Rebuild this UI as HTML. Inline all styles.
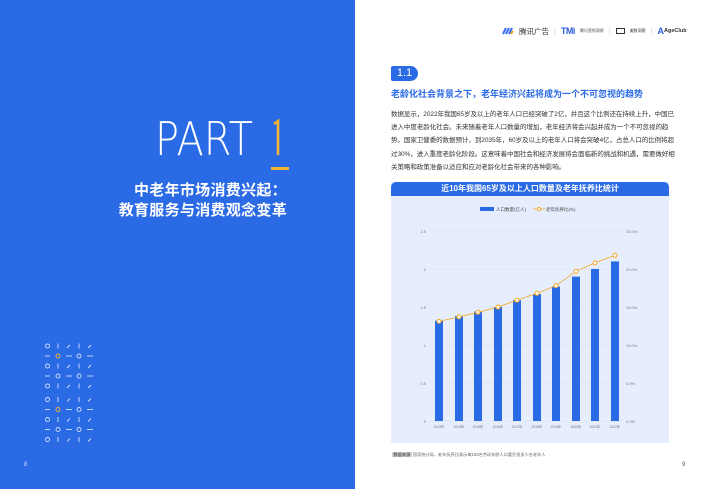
<!DOCTYPE html>
<html><head><meta charset="utf-8"><style>
*{margin:0;padding:0;box-sizing:border-box}
body{width:710px;height:489px;overflow:hidden;background:#fff;position:relative;font-family:"Liberation Sans","Noto Sans CJK SC",sans-serif}
.left{position:absolute;left:0;top:0;width:355px;height:489px;background:#2a6ae4}
.abs{position:absolute}
.cjk{font-family:"Liberation Sans","Noto Sans CJK SC",sans-serif}
p.t{font-size:6.5px;color:#333;line-height:13.2px;letter-spacing:-0.05px}
</style></head><body>
<div class="left">
  <svg class="abs" style="left:150px;top:110px" width="150" height="60" font-family="DejaVu Sans,sans-serif">
    <text x="5" y="45" font-size="46" fill="#fff" font-weight="200" textLength="98" lengthAdjust="spacingAndGlyphs">PART</text>
    <path d="M124 14 L128 11 L128 45" stroke="#f5b335" stroke-width="2.6" fill="none"/>
  </svg>
  <div class="abs" style="left:271px;top:167px;width:18px;height:3px;background:#f5b335"></div>
  <div class="abs cjk" style="right:68px;top:181px;text-align:right;color:#fff;font-weight:bold;font-size:15px;line-height:20px;letter-spacing:0.3px">中老年市场消费兴起：<br>教育服务与消费观念变革</div>
  <svg class="abs" style="left:42px;top:342px" width="55" height="105" viewBox="0 0 55 105" fill="none" stroke-width="0.9">
    <g stroke="#cfe0ff">
      <g id="blk">
        <circle cx="5.5" cy="4" r="2"/><line x1="16" y1="1.5" x2="16" y2="6.5"/><line x1="25" y1="6" x2="28" y2="3"/><line x1="37" y1="1.5" x2="37" y2="6.5"/><line x1="46" y1="6" x2="49" y2="3"/>
        <line x1="3" y1="14" x2="8" y2="14"/><circle cx="16" cy="14" r="2" stroke="#f5b335"/><line x1="24" y1="14" x2="30" y2="14"/><circle cx="37" cy="14" r="2"/><line x1="45" y1="14" x2="51" y2="14"/>
        <circle cx="5.5" cy="24" r="2"/><line x1="16" y1="21.5" x2="16" y2="26.5"/><line x1="25" y1="26" x2="28" y2="23"/><line x1="37" y1="21.5" x2="37" y2="26.5"/><line x1="46" y1="26" x2="49" y2="23"/>
        <line x1="3" y1="34" x2="8" y2="34"/><circle cx="16" cy="34" r="2"/><line x1="24" y1="34" x2="30" y2="34"/><circle cx="37" cy="34" r="2"/><line x1="45" y1="34" x2="51" y2="34"/>
        <circle cx="5.5" cy="44" r="2"/><line x1="16" y1="41.5" x2="16" y2="46.5"/><line x1="25" y1="46" x2="28" y2="43"/><line x1="37" y1="41.5" x2="37" y2="46.5"/><line x1="46" y1="46" x2="49" y2="43"/>
      </g>
      <use href="#blk" y="53.5"/>
    </g>
  </svg>
  <div class="abs" style="left:24px;top:462px;font-size:6px;color:#cfe0ff">8</div>
</div>

<div class="abs" style="left:502px;top:25px;height:12px;display:flex;align-items:center;font-size:7px;color:#333;gap:5px">
  <svg width="12" height="8" viewBox="0 0 12 8"><path d="M1 7L4 1M4 7L7 1M7 7L10 1" stroke="#3a6ef0" stroke-width="2"/><path d="M9 7L11 4" stroke="#f5a623" stroke-width="2"/></svg>
  <span style="font-size:7.5px">腾讯广告</span><span style="color:#ccc">|</span>
  <span style="font-weight:bold;color:#2a5ce0;font-size:9px;letter-spacing:-0.5px">TMi</span><span style="font-size:4px;color:#555">腾讯营销洞察</span><span style="color:#ccc">|</span>
  <span style="border:1px solid #333;width:9px;height:6px;display:inline-block"></span><span style="font-size:4px;color:#333">美数洞察</span><span style="color:#ccc">|</span>
  <span style="font-weight:bold;color:#2a5ce0;font-size:9px">A</span><span style="font-size:5.5px;font-weight:bold;margin-left:-5px">AgeClub</span>
</div>

<div class="abs" style="left:391px;top:66px;width:27px;height:15px;background:#2a6ae4;border-radius:2px 8px 8px 2px;color:#fff;font-size:11px;line-height:15px;text-align:center">1.1</div>
<div class="abs cjk" style="left:391px;top:87px;font-size:9px;font-weight:bold;color:#2a6ae4;white-space:nowrap">老龄化社会背景之下，老年经济兴起将成为一个不可忽视的趋势</div>
<p class="abs t cjk" style="left:391px;top:108px;width:285px">数据显示，2022年我国65岁及以上的老年人口已经突破了2亿，并且这个比例还在持续上升，中国已进入中度老龄化社会。未来随着老年人口数量的增加，老年经济将会兴起并成为一个不可忽视的趋势。国家卫健委的数据预计，到2035年，60岁及以上的老年人口将会突破4亿，占总人口的比例将超过30%，进入重度老龄化阶段。这意味着中国社会和经济发展将会面临新的挑战和机遇，需要做好相关策略和政策准备以适应和应对老龄化社会带来的各种影响。</p>

<div class="abs" style="left:391px;top:182px;width:278px;height:261px;background:#e6eefd"></div>
<div class="abs cjk" style="left:391px;top:182px;width:278px;height:14px;background:#2a6ae4;border-radius:5px 5px 0 0;color:#fff;font-size:8px;font-weight:bold;text-align:center;line-height:14px">近10年我国65岁及以上人口数量及老年抚养比统计</div>
<svg class="abs" style="left:380px;top:180px" width="300" height="270" viewBox="380 180 300 270" font-family="Liberation Sans,Noto Sans CJK SC,sans-serif">
  <rect x="480" y="207" width="14" height="4" fill="#2a6ae4"/>
  <text x="496" y="211" font-size="4.5" fill="#444">人口数量(亿人)</text>
  <line x1="533" y1="209" x2="545" y2="209" stroke="#f5a623" stroke-width="0.8"/><circle cx="539" cy="209" r="1.6" fill="#fff" stroke="#f5a623" stroke-width="0.9"/>
  <text x="546" y="211" font-size="4.5" fill="#444">老年抚养比(%)</text>
  <g stroke="#d5ddec" stroke-width="0.4">
    <line x1="430" y1="231" x2="622" y2="231"/><line x1="430" y1="269" x2="622" y2="269"/><line x1="430" y1="307" x2="622" y2="307"/><line x1="430" y1="345" x2="622" y2="345"/><line x1="430" y1="383" x2="622" y2="383"/><line x1="430" y1="421" x2="622" y2="421"/>
  </g>
  <g font-size="4" fill="#777" text-anchor="end">
    <text x="426" y="233">2.5</text><text x="426" y="271">2</text><text x="426" y="309">1.5</text><text x="426" y="347">1</text><text x="426" y="385">0.5</text><text x="426" y="423">0</text>
  </g>
  <g font-size="4" fill="#777">
    <text x="626" y="233">25.0%</text><text x="626" y="271">20.0%</text><text x="626" y="309">15.0%</text><text x="626" y="347">10.0%</text><text x="626" y="385">5.0%</text><text x="626" y="423">0.0%</text>
  </g>
  <g fill="#2a6ae4">
    <rect x="435" y="320.7" width="8" height="100.3"/><rect x="455" y="316.1" width="8" height="104.9"/><rect x="474" y="311.6" width="8" height="109.4"/><rect x="494" y="307" width="8" height="114"/><rect x="513" y="300.2" width="8" height="120.8"/><rect x="533" y="294.1" width="8" height="126.9"/><rect x="552" y="286.5" width="8" height="134.5"/><rect x="572" y="276.6" width="8" height="144.4"/><rect x="591" y="269" width="8" height="152"/><rect x="611" y="261.4" width="8" height="159.6"/>
  </g>
  <polyline fill="none" stroke="#f5a623" stroke-width="0.8" points="439,321.4 459,316.9 478,312.3 498,307 517,300.2 537,293.3 556,285.7 576,271.3 595,262.9 615,255.3"/>
  <g fill="#fff" stroke="#f5a623" stroke-width="1">
    <circle cx="439" cy="321.4" r="2"/><circle cx="459" cy="316.9" r="2"/><circle cx="478" cy="312.3" r="2"/><circle cx="498" cy="307" r="2"/><circle cx="517" cy="300.2" r="2"/><circle cx="537" cy="293.3" r="2"/><circle cx="556" cy="285.7" r="2"/><circle cx="576" cy="271.3" r="2"/><circle cx="595" cy="262.9" r="2"/><circle cx="615" cy="255.3" r="2"/>
  </g>
  <g font-size="3.3" fill="#777" text-anchor="middle">
    <text x="439" y="428">2013年</text><text x="459" y="428">2014年</text><text x="478" y="428">2015年</text><text x="498" y="428">2016年</text><text x="517" y="428">2017年</text><text x="537" y="428">2018年</text><text x="556" y="428">2019年</text><text x="576" y="428">2020年</text><text x="595" y="428">2021年</text><text x="615" y="428">2022年</text>
  </g>
</svg>
<div class="abs cjk" style="left:392px;top:452px;font-size:4.2px;color:#666;white-space:nowrap"><span style="background:#ccc;color:#333;padding:0 1.5px;border-radius:1px">数据来源</span> 国家统计局，老年抚养比表示每100名劳动年龄人口要负担多少名老年人</div>
<div class="abs" style="left:682px;top:462px;font-size:6px;color:#555">9</div>
</body></html>
